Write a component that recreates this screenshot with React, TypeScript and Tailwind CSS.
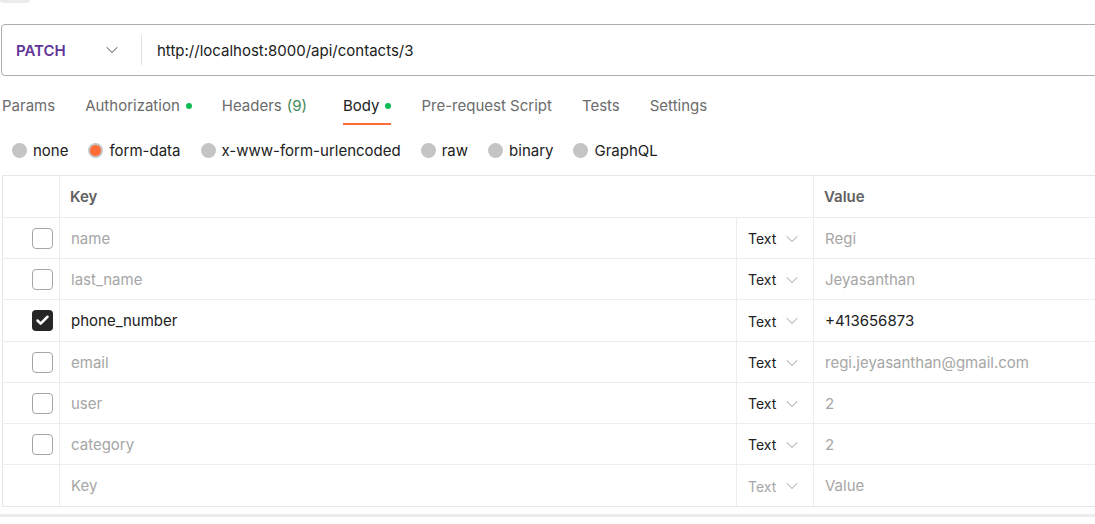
import React from "react";
import { ChevronDown, Check } from "lucide-react";

const font = { fontFamily: "Inter, 'Noto Sans', sans-serif" };

type Row = { key: string; value: string; checked?: boolean; placeholder?: boolean; tall?: boolean };

const rows: Row[] = [
  { key: "name", value: "Regi" },
  { key: "last_name", value: "Jeyasanthan" },
  { key: "phone_number", value: "+413656873", checked: true, tall: true },
  { key: "email", value: "regi.jeyasanthan@gmail.com" },
  { key: "user", value: "2" },
  { key: "category", value: "2" },
  { key: "Key", value: "Value", placeholder: true },
];

const tabs = [
  { label: "Params" },
  { label: "Authorization", dot: true },
  { label: "Headers", count: "(9)" },
  { label: "Body", dot: true, active: true },
  { label: "Pre-request Script" },
  { label: "Tests" },
  { label: "Settings" },
];

const radios = [
  { label: "none" },
  { label: "form-data", selected: true },
  { label: "x-www-form-urlencoded" },
  { label: "raw" },
  { label: "binary" },
  { label: "GraphQL" },
];

export default function App() {
  return (
    <div className="w-[1095px] h-[524px] overflow-hidden bg-white text-[15px]" style={font}>
      <div className="h-[3px] w-[30px] rounded-b-[4px] bg-[#ececec]" />
      {/* URL bar */}
      <div className="mt-[21px] ml-[1px] w-[1120px] h-[52px] border border-[#adadad] rounded-[4px] flex items-center">
        <div className="w-[139px] h-full flex items-center pl-[14px]">
          <span className="font-semibold text-[#623497] pt-[2px]">PATCH</span>
          <ChevronDown size={20} strokeWidth={1.25} className="ml-auto mr-[19px] text-[#6b6b6b]" />
        </div>
        <div className="w-px h-[30px] bg-[#e0e0e0]" />
        <div className="pl-[15px] pt-[2px] text-[#212121]">http://localhost:8000/api/contacts/3</div>
      </div>

      {/* Tabs */}
      <div className="mt-[19px] ml-[2px] flex gap-[30px]">
        {tabs.map((t) => (
          <div key={t.label} className={`flex flex-col ${t.count ? "mr-[6px]" : ""}`}>
            <div
              className={`flex items-center h-[22px] leading-[22px] ${
                t.active ? "text-[#212121]" : "text-[#6b6b6b]"
              }`}
            >
              <span>{t.label}</span>
              {t.count && <span className="ml-[5px] text-[#3f8a5a]">{t.count}</span>}
              {t.dot && <span className="ml-[6px] w-[6px] h-[6px] rounded-full bg-[#0cbb52]" />}
            </div>
            <div className={`mt-[6px] h-[2px] ${t.active ? "bg-[#ff6c37]" : "bg-transparent"}`} />
          </div>
        ))}
      </div>

      {/* Radios */}
      <div className="mt-[15px] ml-[12px] h-[20px] flex items-center gap-[20px]">
        {radios.map((r) => (
          <div key={r.label} className="flex items-center gap-[6px] text-[#212121]">
            {r.selected ? (
              <span className="w-[15px] h-[15px] rounded-full bg-[#c4c4c4] flex items-center justify-center">
                <span className="w-[11px] h-[11px] rounded-full bg-[#ff6c37]" />
              </span>
            ) : (
              <span className="w-[15px] h-[15px] rounded-full bg-[#c4c4c4]" />
            )}
            <span className="pt-[2px]">{r.label}</span>
          </div>
        ))}
      </div>

      {/* Table */}
      <div className="mt-[15px] ml-[2px] w-[1120px] border-l border-t border-b border-[#e6e6e6]">
        <div className="flex h-[42px] border-b border-[#ededed]">
          <div className="w-[57px] border-r border-[#ededed]" />
          <div className="w-[754px] border-r border-[#ededed] flex items-center pl-[10px] pt-[2px] font-semibold text-[#616161]">
            Key
          </div>
          <div className="flex-1 flex items-center pl-[10px] pt-[2px] font-semibold text-[#616161]">Value</div>
        </div>
        {rows.map((r, i) => {
          const keyColor = r.checked ? "text-[#212121]" : "text-[#a6a6a6]";
          return (
            <div
              key={i}
              className={`flex ${r.tall ? "h-[42px]" : "h-[41px]"} ${
                i < rows.length - 1 ? "border-b border-[#ededed]" : ""
              }`}
            >
              <div className="w-[57px] border-r border-[#ededed] flex items-center justify-end pr-[6px]">
                {!r.placeholder &&
                  (r.checked ? (
                    <span className="w-[21px] h-[21px] rounded-[4px] bg-[#262626] flex items-center justify-center">
                      <Check size={15} strokeWidth={4} className="text-white" />
                    </span>
                  ) : (
                    <span className="w-[21px] h-[21px] rounded-[4px] border border-[#a6a6a6] bg-white" />
                  ))}
              </div>
              <div className={`w-[677px] border-r border-[#ededed] flex items-center pl-[11px] pt-[2px] ${keyColor}`}>
                {r.key}
              </div>
              <div className="w-[77px] border-r border-[#ededed] flex items-center pl-[11px] text-[14px] pt-[1px]">
                <span className={r.placeholder ? "text-[#a6a6a6]" : "text-[#212121]"}>Text</span>
                <ChevronDown size={20} strokeWidth={1.25} className="ml-[6px] text-[#b0b0b0]" />
              </div>
              <div className={`flex-1 flex items-center pl-[11px] pt-[2px] ${keyColor}`}>{r.value}</div>
            </div>
          );
        })}
      </div>
      <div className="mt-[7px] h-[3px] w-full bg-[#ededed]" />
    </div>
  );
}
